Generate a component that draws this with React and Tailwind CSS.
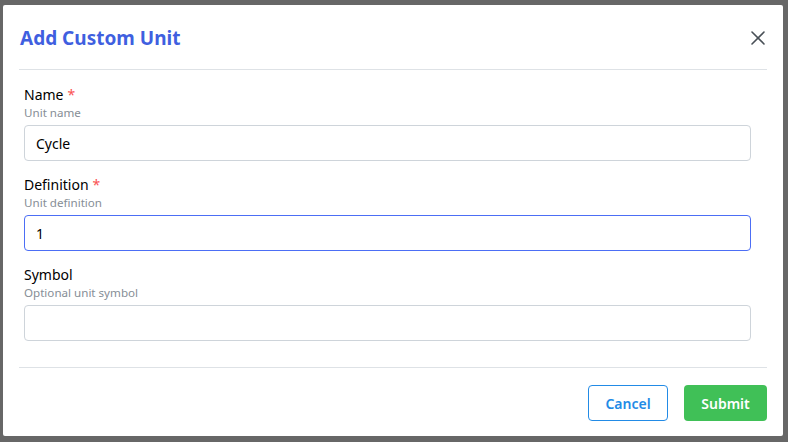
import { X } from "lucide-react";

const font = { fontFamily: '"Noto Sans", "Liberation Sans", sans-serif' };

function Field({ label, description, value, required, focused }) {
  return (
    <div className="flex flex-col">
      <label className="text-[14px] leading-[20px] text-[#000] font-normal">
        {label}
        {required && <span className="text-[#fa5252] ml-1">*</span>}
      </label>
      <p className="text-[11.6px] leading-[16px] text-[#868e96]">{description}</p>
      <input
        readOnly
        value={value}
        className={`mt-1 h-[36px] w-full rounded-[4px] border pl-[11px] pr-3 text-[14px] text-[#000] outline-none ${
          focused ? "border-[#4c6ef5]" : "border-[#ced4da]"
        }`}
      />
    </div>
  );
}

export default function App() {
  return (
    <div className="w-[788px] h-[442px] bg-[#676767] pt-[5px] pl-[3px] overflow-hidden" style={font}>
      <div className="w-[780px] h-[431px] bg-white rounded-[2px] flex flex-col">
        {/* Header */}
        <div className="mx-4 h-[65px] border-b border-[#dee2e6] flex items-center justify-between pt-[2px]">
          <h2 className="text-[19px] leading-[28px] font-bold text-[#3f5fe0] pl-px">Add Custom Unit</h2>
          <button className="w-6 h-6 -mr-[3px] text-[#495057] flex items-center justify-center">
            <X size={24} strokeWidth={1.6} />
          </button>
        </div>

        {/* Body */}
        <div className="flex-1 pl-[21px] pr-[32px] pt-[15px] flex flex-col gap-[14px]">
          <Field label="Name" description="Unit name" value="Cycle" required />
          <Field label="Definition" description="Unit definition" value="1" required focused />
          <Field label="Symbol" description="Optional unit symbol" value="" />
        </div>

        {/* Footer */}
        <div className="mx-4 border-t border-[#dee2e6] pt-[17px] pb-[15px] flex justify-end gap-4">
          <button className="h-[36px] w-[80px] rounded-[4px] border border-[#228be6] text-[#228be6] text-[14px] font-semibold">
            Cancel
          </button>
          <button className="h-[36px] w-[83px] rounded-[4px] bg-[#40c057] text-white text-[14px] font-semibold">
            Submit
          </button>
        </div>
      </div>
    </div>
  );
}
